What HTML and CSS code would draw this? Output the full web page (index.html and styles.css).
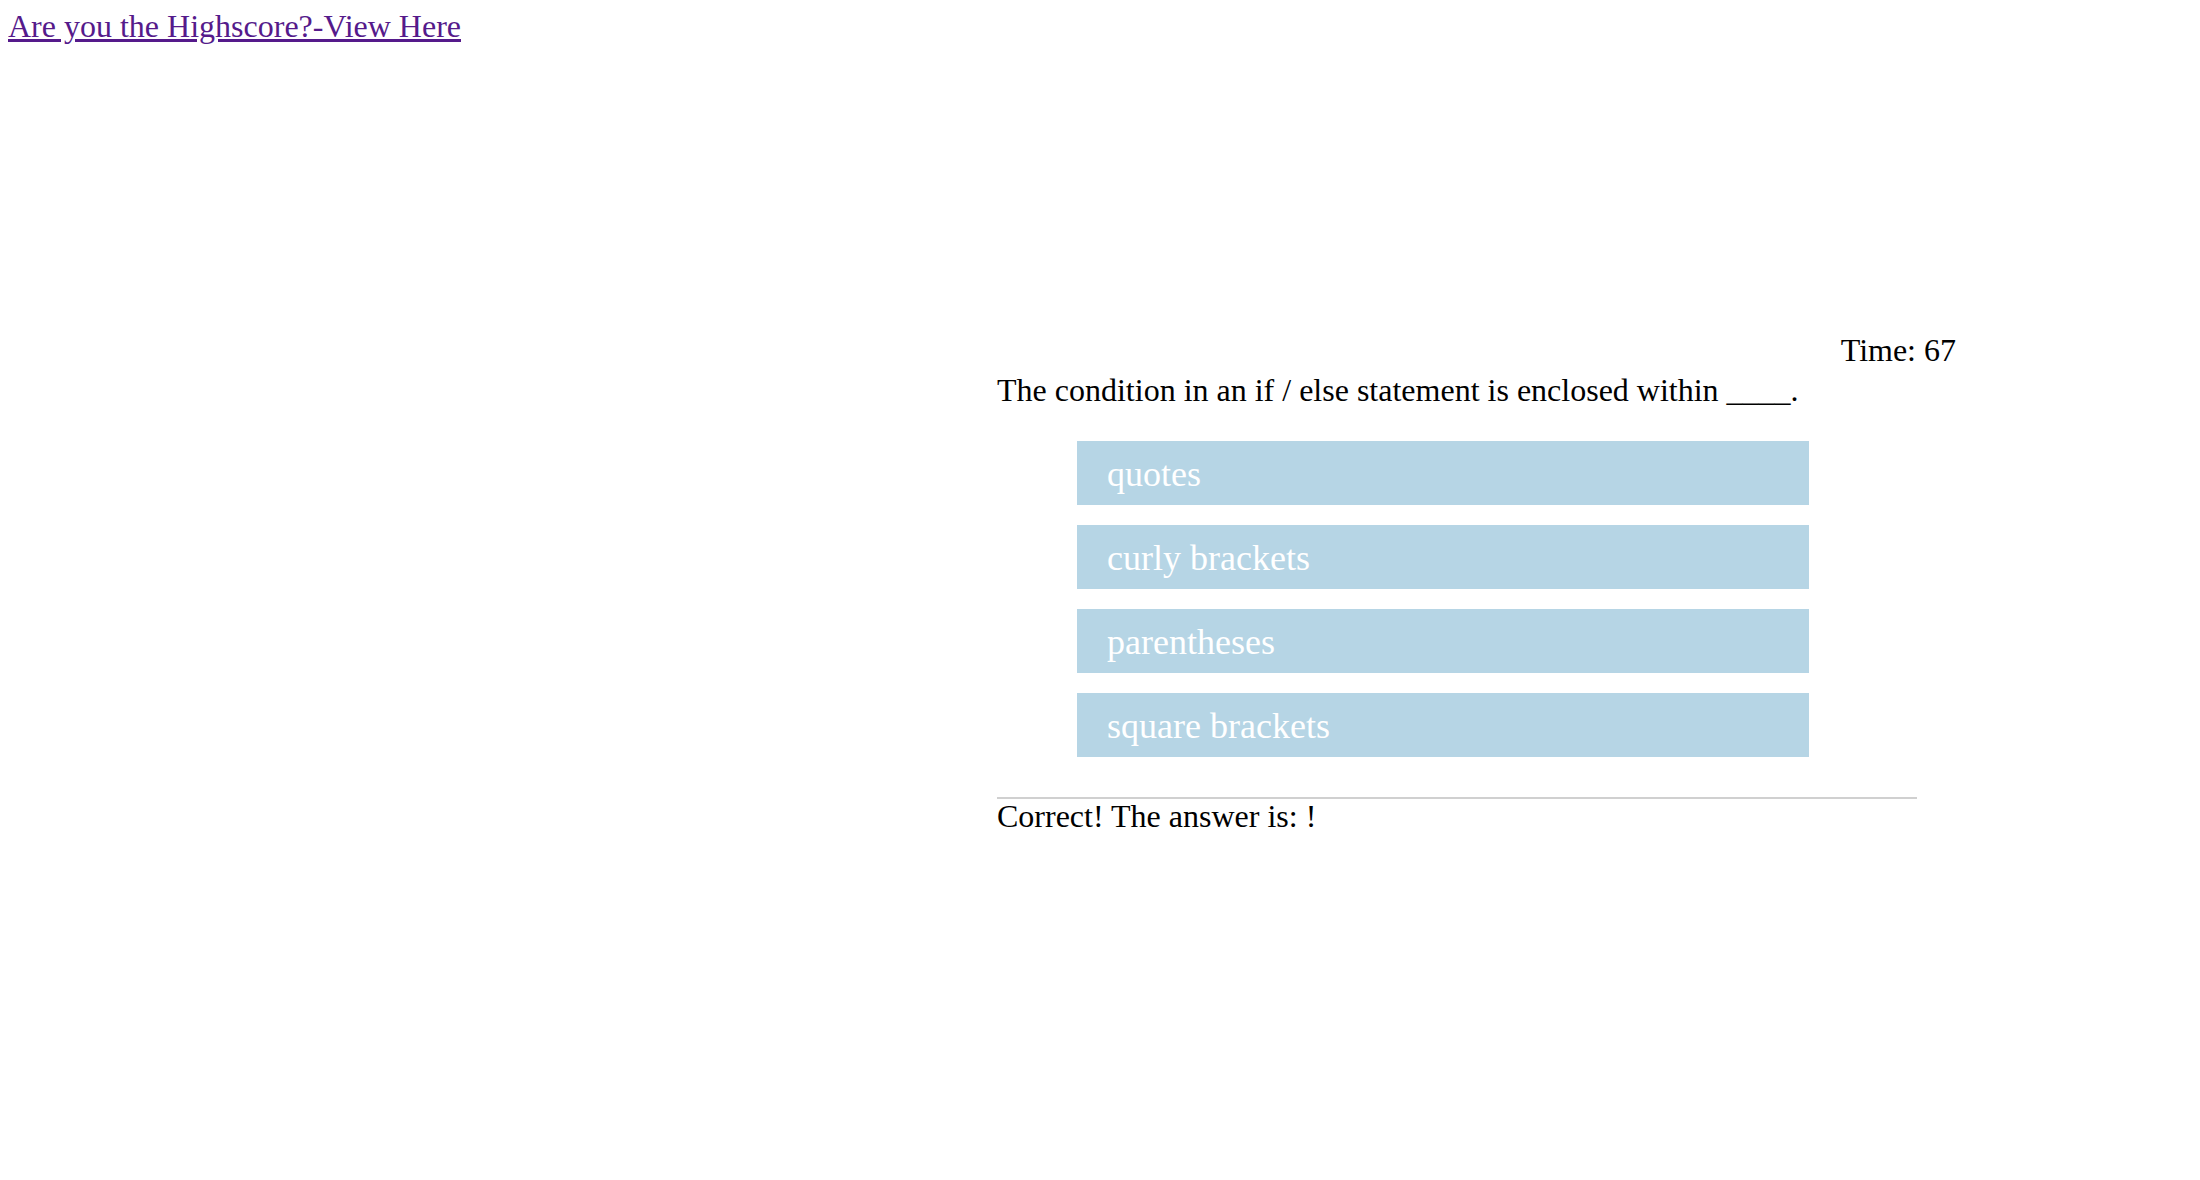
FILE: index.html
```html
<!DOCTYPE html>
<html lang="en">
<head>
  <meta charset="UTF-8">
  <title>Code Quiz</title>
  <link rel="stylesheet" href="styles.css">
</head>
<body>
  <a class="scores-link" href="#">Are you the Highscore?-View Here</a>

  <main class="quiz">
    <div class="timer">Time: <span id="time">67</span></div>
    <p class="question" id="question">The condition in an if / else statement is enclosed within ____.</p>
    <div class="choices" id="choices">
      <button class="choice">quotes</button>
      <button class="choice">curly brackets</button>
      <button class="choice">parentheses</button>
      <button class="choice">square brackets</button>
    </div>
    <div class="result" id="result">Correct! The answer is: !</div>
  </main>
</body>
</html>
```

FILE: styles.css
```css
body{
  margin:8px;
  font-family:"Liberation Serif", "Times New Roman", serif;
  font-size:32px;
  color:#000;
  background:#fff;
}
.scores-link{color:#551a8b;}

/* ------- QUIZ ------- */
.quiz{margin:287px 0 0 989px;width:959px;}
.timer{text-align:right;margin-bottom:3px;}
.question{margin:0 0 32px;}
.choices{display:flex;flex-direction:column;gap:20px;margin-left:80px;width:732px;}
.choice{
  height:64px;
  padding:1px 30px 0;
  text-align:left;
  font-family:inherit;
  font-size:36px;
  color:#fff;
  background:#b6d5e5;
  border:none;
  cursor:pointer;
}
.result{width:920px;margin-top:40px;border-top:2px solid #d0d0d0;line-height:34px;}
```
